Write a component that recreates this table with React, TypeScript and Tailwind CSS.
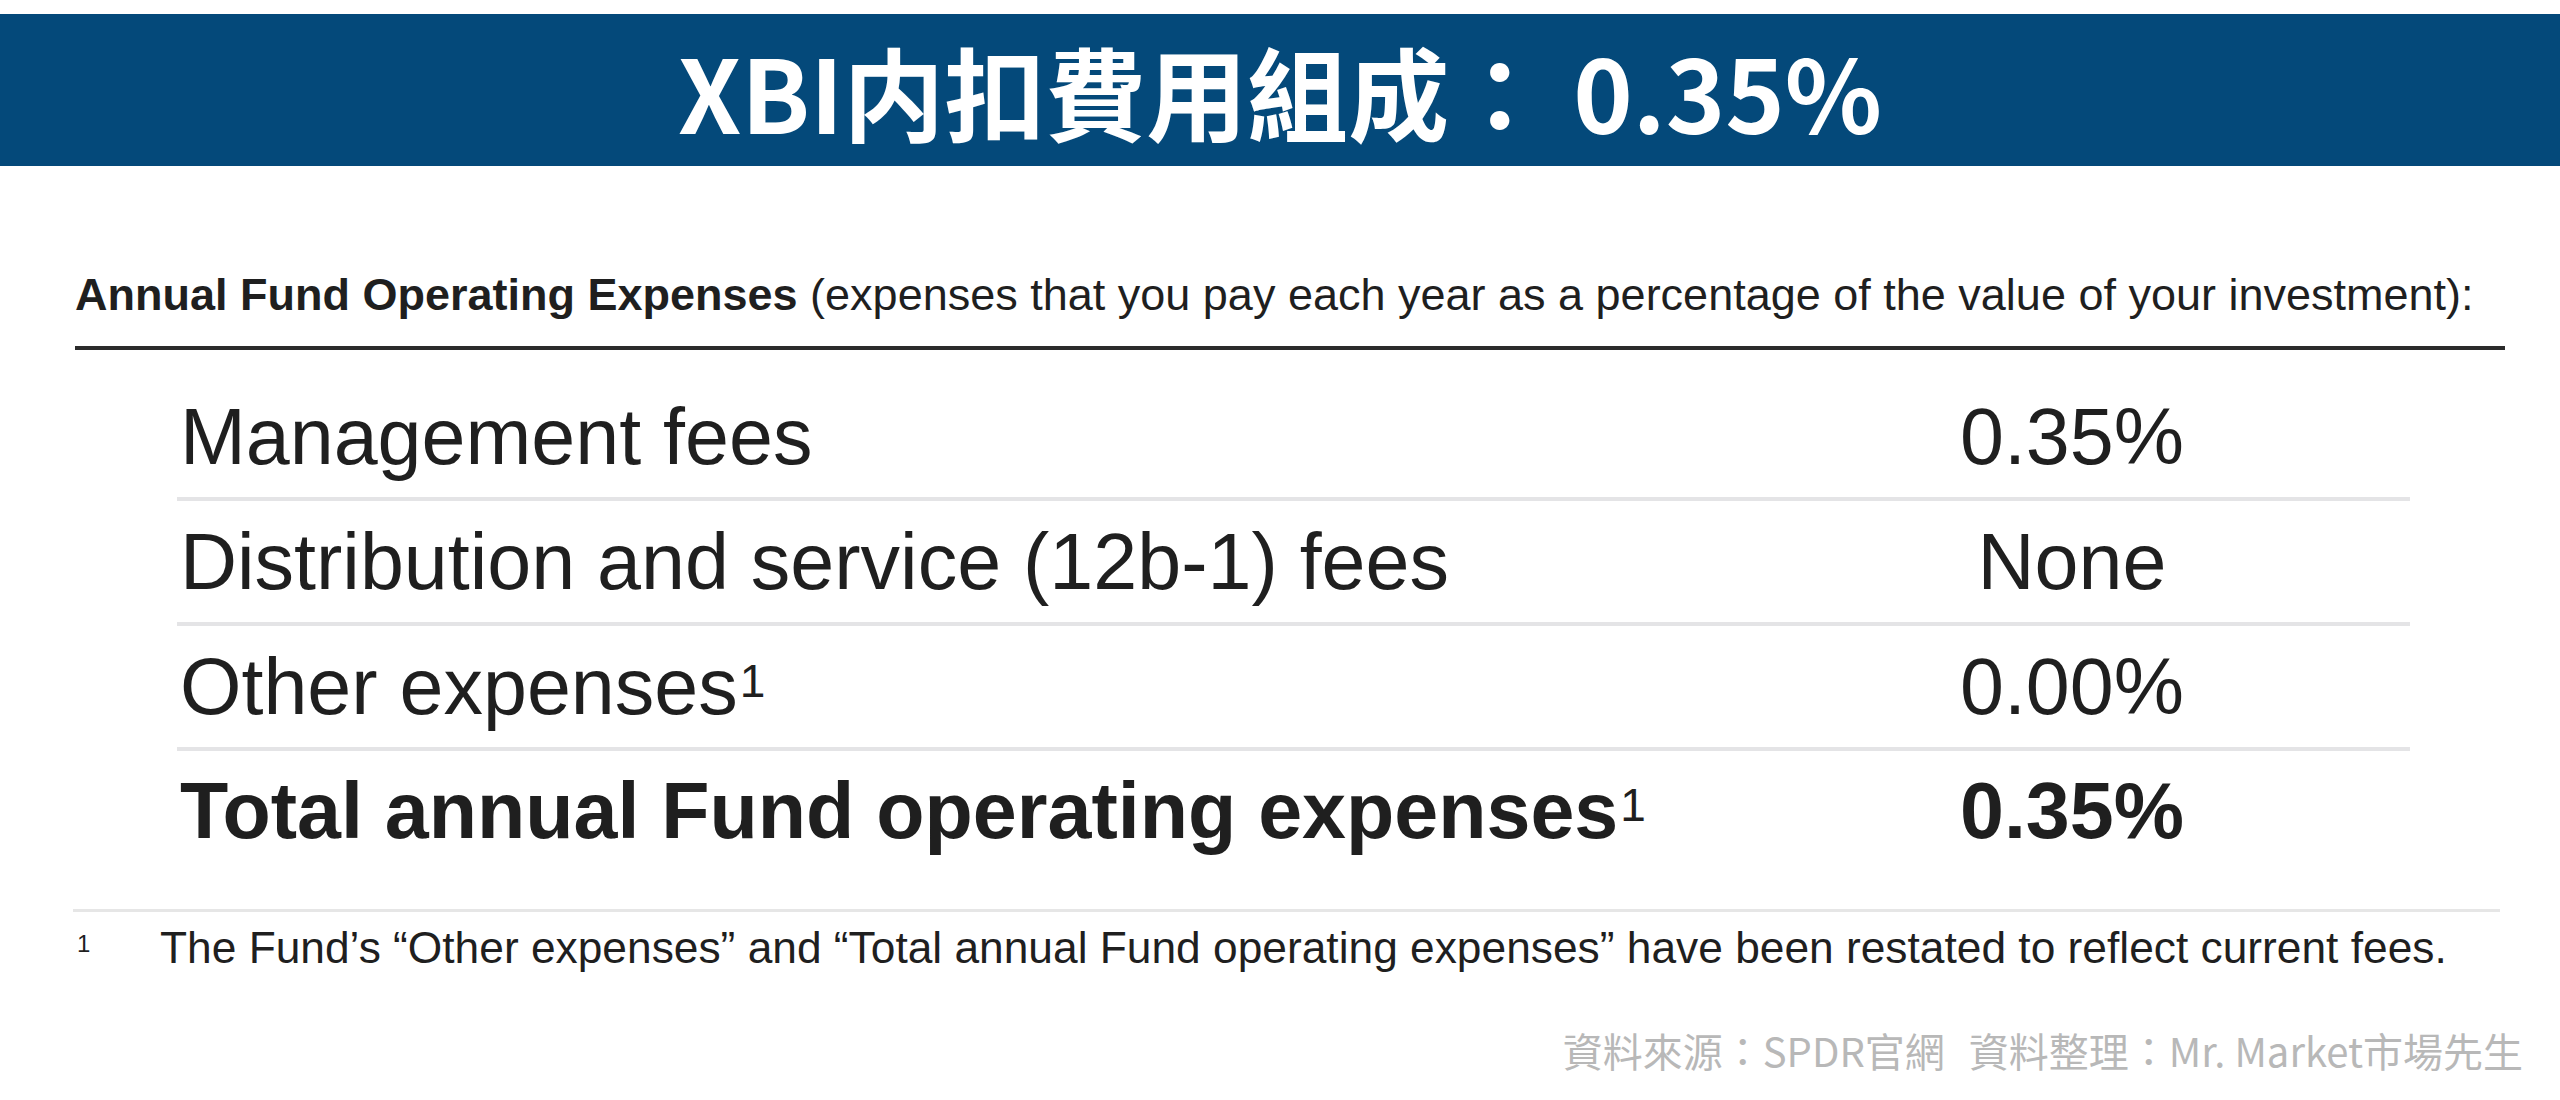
import React from 'react';

const rows = [
  { label: 'Management fees', value: '0.35%', note: false, bold: false },
  { label: 'Distribution and service (12b-1) fees', value: 'None', note: false, bold: false },
  { label: 'Other expenses', value: '0.00%', note: true, bold: false },
  { label: 'Total annual Fund operating expenses', value: '0.35%', note: true, bold: true },
];

const App: React.FC = () => {
  return (
    <div className="w-full h-[1100px] bg-white pt-[14px] font-['Liberation_Sans',Arial,sans-serif] text-[#1f1f1f]">
      {/* Title bar */}
      <div className="h-[152px] bg-[#04497a] flex items-center justify-center">
        <h1 className="text-white font-bold text-[101px] leading-none font-['Noto_Sans_CJK_TC','Noto_Sans',sans-serif]">
          XBI内扣費用組成： 0.35%
        </h1>
      </div>

      {/* Heading line */}
      <div className="ml-[75px] w-[2430px] pt-[101px]">
        <div className="text-[45px] leading-[56px] whitespace-nowrap">
          <span className="font-bold">Annual Fund Operating Expenses</span> (expenses that you pay each year as a
          percentage of the value of your investment):
        </div>
        <div className="mt-[23px] h-[4px] bg-[#2b2b2b]" />
      </div>

      {/* Fee table */}
      <div className="ml-[177px] w-[2233px] mt-[26px]">
        {rows.map((r, i) => (
          <div
            key={r.label}
            className={
              i < rows.length - 1
                ? 'h-[125px] flex items-center pr-[138px] border-b-4 border-[#e4e4e6]'
                : 'h-[118px] flex items-center pr-[138px]'
            }
          >
            <div className={r.bold ? 'flex-1 pl-[3px] text-[79px] font-bold leading-none' : 'flex-1 pl-[3px] text-[79px] leading-none'}>
              {r.label}
              {r.note && <span className="ml-[2px] text-[46px] font-normal align-[17px]">1</span>}
            </div>
            <div className={r.bold ? 'w-[400px] text-center text-[79px] font-bold leading-none' : 'w-[400px] text-center text-[79px] leading-none'}>
              {r.value}
            </div>
          </div>
        ))}
      </div>

      {/* Footnote */}
      <div className="ml-[73px] w-[2427px] mt-[40px] h-[3px] bg-[#e6e6e6]" />
      <div className="ml-[77px] mt-[8px] flex items-start">
        <span className="w-[83px] text-[24px] leading-none pt-[12px]">1</span>
        <span className="text-[44.3px] leading-[56px] whitespace-nowrap">
          The Fund’s “Other expenses” and “Total annual Fund operating expenses” have been restated to reflect current fees.
        </span>
      </div>

      {/* Source */}
      <div className="mr-[37px] mt-[54px] flex justify-end gap-[24px] text-[40px] leading-none text-[#b8b8b8] font-['Noto_Sans_CJK_TC','Noto_Sans',sans-serif]">
        <span>資料來源：SPDR官網</span>
        <span>資料整理：Mr. Market市場先生</span>
      </div>
    </div>
  );
};

export default App;
